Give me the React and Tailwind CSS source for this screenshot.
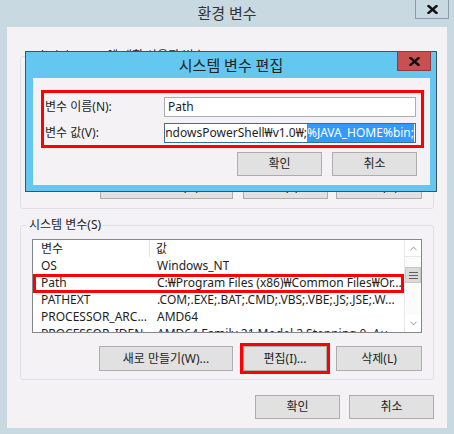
import React from 'react';
import { ChevronUp, ChevronDown } from 'lucide-react';

const rows = [
  ['OS', 'Windows_NT'],
  ['Path', 'C:₩Program Files (x86)₩Common Files₩Or...'],
  ['PATHEXT', '.COM;.EXE;.BAT;.CMD;.VBS;.VBE;.JS;.JSE;.W...'],
  ['PROCESSOR_ARC...', 'AMD64'],
  ['PROCESSOR_IDEN...', 'AMD64 Family 21 Model 2 Stepping 0, Au...'],
];

const CloseX = () => (
  <svg width="11" height="9" viewBox="0 0 11 9">
    <path d="M1.5 1 L9.5 8 M9.5 1 L1.5 8" stroke="#111" strokeWidth="2.4" strokeLinecap="square" />
  </svg>
);

const WinButton = ({ children, className = '' }) => (
  <div
    className={`flex items-center justify-center bg-[#e1e1e1] border border-[#adadad] text-[12px] text-[#1e1e1e] ${className}`}
  >
    {children}
  </div>
);

const VarList = () => (
  <div className="mt-[6px] w-[390px] h-[94px] border border-[#828790] bg-white flex overflow-hidden">
    <div className="flex-1 overflow-hidden">
      {/* header */}
      <div className="flex h-[17px] items-center">
        <div className="w-[117px] h-full pl-[8px] border-r border-[#e5e5e5] flex items-center">변수</div>
        <div className="pl-[6px]">값</div>
      </div>
      {rows.map(([name, value]) => (
        <div key={name} className="relative flex h-[17px] items-center whitespace-nowrap">
          <div className="w-[117px] pl-[8px] overflow-hidden">{name}</div>
          <div className="pl-[7px] overflow-hidden">{value}</div>
          {name === 'Path' && (
            <div className="absolute left-0 right-0 top-0 h-[19px] border-[3px] border-[#ff0000]" />
          )}
        </div>
      ))}
    </div>
    {/* scrollbar */}
    <div className="w-[17px] border-l border-[#e8e8e8] bg-[#fbfbfb] flex flex-col">
      <div className="h-[17px] flex items-center justify-center border-b border-[#e8e8e8] bg-white">
        <ChevronUp size={11} strokeWidth={1.5} color="#606060" />
      </div>
      <div className="mt-[10px] h-[16px] bg-[#dadada] border border-[#c8c8c8] flex items-center justify-center">
        <svg width="9" height="7" viewBox="0 0 9 7">
          <path d="M0 0.5 H9 M0 3.5 H9 M0 6.5 H9" stroke="#606060" strokeWidth="1" />
        </svg>
      </div>
      <div className="flex-1" />
      <div className="h-[17px] flex items-center justify-center bg-white">
        <ChevronDown size={11} strokeWidth={1.5} color="#606060" />
      </div>
    </div>
  </div>
);

export default function App() {
  return (
    <div className="relative w-[454px] h-[434px] overflow-hidden bg-[#c9d9e1] font-['Noto_Sans','Noto_Sans_CJK_KR',sans-serif] text-[12px] text-[#1e1e1e]">
      {/* outer title bar */}
      <div className="relative h-[27px] flex items-center justify-center">
        <span className="text-[15px] text-[#333333] leading-none">환경 변수</span>
        <div className="absolute right-[5px] top-[-1px] w-[34px] h-[20px] border border-[#8d9ca6] flex items-center justify-center">
          <CloseX />
        </div>
      </div>

      {/* outer content */}
      <div className="ml-[7px] w-[440px] h-[401px] bg-[#f5f2f6] pt-[21px] px-[13px]">
        <fieldset className="w-[414px] border border-[#dde0e4] rounded-[3px] pl-[11px] pr-[11px] pb-[9px]">
          <legend className="-ml-[5px] px-[2px] leading-[16px]">Administrator에 대한 사용자 변수(U)</legend>
          <div className="h-[97px]" />
          <div className="mt-[13px] flex justify-end">
            <WinButton className="w-[133px] h-[25px]">새로 만들기(N)...</WinButton>
            <WinButton className="ml-[10px] w-[85px] h-[25px]">편집(E)...</WinButton>
            <WinButton className="ml-[8px] w-[86px] h-[25px]">삭제(D)</WinButton>
          </div>
        </fieldset>

        <fieldset className="mt-[8px] w-[414px] border border-[#dde0e4] rounded-[3px] pl-[11px] pr-[11px] pb-[8px]">
          <legend className="-ml-[5px] px-[2px] leading-[16px]">시스템 변수(S)</legend>
          <VarList />
          <div className="mt-[13px] flex justify-end">
            <WinButton className="w-[134px] h-[25px]">새로 만들기(W)...</WinButton>
            <WinButton className="ml-[10px] w-[84px] h-[25px] outline-[3px] outline-solid outline-[#ff0000]">편집(I)...</WinButton>
            <WinButton className="ml-[9px] w-[86px] h-[25px]">삭제(L)</WinButton>
          </div>
        </fieldset>

        <div className="mt-[15px] flex justify-end">
          <WinButton className="w-[85px] h-[24px]">확인</WinButton>
          <WinButton className="ml-[9px] w-[85px] h-[24px]">취소</WinButton>
        </div>
      </div>

      {/* edit dialog over the window */}
      <div className="absolute left-[25px] top-[51px] w-[412px] h-[141px] border border-[#3a5566] bg-[#63c7ef]">
        <div className="relative h-[26px] flex items-center justify-center">
          <span className="text-[15px] text-[#222222] leading-none">시스템 변수 편집</span>
          <div className="absolute right-[5px] top-[-1px] w-[34px] h-[20px] bg-[#c75050] border border-[#8c3c3c] flex items-center justify-center">
            <CloseX />
          </div>
        </div>
        <div className="ml-[7px] w-[397px] h-[107px] bg-[#f5f2f6] pt-[12px] pl-[8px]">
          <div className="w-[383px] h-[58px] border-[3px] border-[#ff0000] pt-[4px] pl-[1px]">
            <div className="flex items-center h-[20px]">
              <div className="w-[119px]">변수 이름(N):</div>
              <div className="w-[252px] h-[20px] border border-[#abadb3] bg-white pl-[3px] flex items-center">Path</div>
            </div>
            <div className="mt-[6px] flex items-center h-[20px]">
              <div className="w-[119px]">변수 값(V):</div>
              <div className="w-[252px] h-[20px] border border-[#3c6f95] bg-white flex items-center justify-end overflow-hidden whitespace-nowrap pr-[1px]">
                <span>ndowsPowerShell₩v1.0₩;</span>
                <span className="bg-[#3399ff] text-white">%JAVA_HOME%bin;</span>
              </div>
            </div>
          </div>
          <div className="mt-[4px] pr-[13px] flex justify-end">
            <WinButton className="w-[85px] h-[24px] border-[#3c7fb1]">확인</WinButton>
            <WinButton className="ml-[10px] w-[85px] h-[24px]">취소</WinButton>
          </div>
        </div>
      </div>
    </div>
  );
}
